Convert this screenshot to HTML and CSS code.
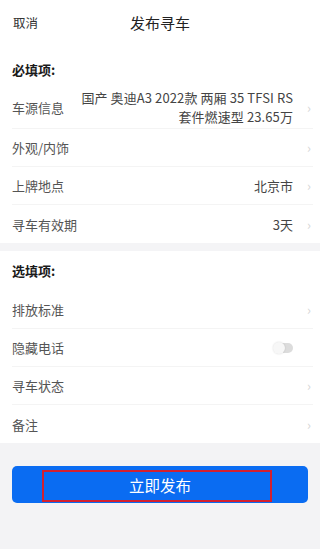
FILE: index.html
```html
<!DOCTYPE html>
<html lang="zh-CN">
<head>
    <meta charset="UTF-8">
    <meta name="viewport" content="width=device-width, initial-scale=1.0">
    <title>发布寻车</title>
    <link rel="stylesheet" href="styles.css">
</head>
<body>

    <div class="page">
        <div class="header">
            <span class="cancel">取消</span>
            <span class="title">发布寻车</span>
        </div>

        <div class="section">
            <div class="section-title">必填项:</div>
            <div class="row row-tall">
                <span class="label">车源信息</span>
                <span class="value multi">国产 奥迪A3 2022款 两厢 35 TFSI RS<br>套件燃速型 23.65万</span>
                <span class="arrow">›</span>
            </div>
            <div class="row">
                <span class="label">外观/内饰</span>
                <span class="value"></span>
                <span class="arrow">›</span>
            </div>
            <div class="row">
                <span class="label">上牌地点</span>
                <span class="value">北京市</span>
                <span class="arrow">›</span>
            </div>
            <div class="row last">
                <span class="label">寻车有效期</span>
                <span class="value">3天</span>
                <span class="arrow">›</span>
            </div>
        </div>

        <div class="gap"></div>

        <div class="section">
            <div class="section-title second">选填项:</div>
            <div class="row">
                <span class="label">排放标准</span>
                <span class="value"></span>
                <span class="arrow">›</span>
            </div>
            <div class="row">
                <span class="label">隐藏电话</span>
                <span class="value"></span>
                <span class="switch"><span class="knob"></span></span>
            </div>
            <div class="row">
                <span class="label">寻车状态</span>
                <span class="value"></span>
                <span class="arrow">›</span>
            </div>
            <div class="row last">
                <span class="label">备注</span>
                <span class="value"></span>
                <span class="arrow">›</span>
            </div>
        </div>

        <div class="footer">
            <div class="btn">
                立即发布
                <span class="mark"></span>
            </div>
        </div>
    </div>

</body>
</html>
```

FILE: styles.css
```css
body {
    font-family: 'Noto Sans CJK SC', 'Noto Sans', sans-serif;
    margin: 0;
    padding: 0;
    background: #fff;
    color: #333;
}
.page {
    width: 320px;
    height: 549px;
    display: flex;
    flex-direction: column;
    overflow: hidden;
}
.header {
    height: 45px;
    position: relative;
    display: flex;
    align-items: center;
    justify-content: center;
}
.header .cancel {
    position: absolute;
    left: 13px;
    font-size: 12.5px;
    color: #333;
}
.header .title {
    font-size: 15px;
    color: #222;
}
.section {
    padding: 0 7px 0 12px;
}
.section-title {
    font-size: 13px;
    font-weight: bold;
    color: #1a1a1a;
    line-height: 18px;
    padding: 16px 0 7px;
}
.section-title.second {
    padding: 11px 0 11px;
}
.row {
    display: flex;
    align-items: center;
    min-height: 38px;
    border-bottom: 1px solid #f4f4f4;
    box-sizing: border-box;
}
.row.last {
    border-bottom: none;
}
.row-tall {
    min-height: 42px;
    padding: 2px 0;
}
.label {
    font-size: 13px;
    color: #555;
    white-space: nowrap;
}
.value {
    flex: 1;
    text-align: right;
    font-size: 13px;
    color: #444;
    padding-right: 12px;
}
.value.multi {
    line-height: 19px;
    padding-left: 6px;
    letter-spacing: 0.1px;
}
.arrow {
    width: 8px;
    font-size: 13px;
    color: #d6d6d6;
    text-align: center;
}
.switch {
    width: 19px;
    height: 10px;
    border-radius: 5px;
    background: #dcdcdc;
    position: relative;
    margin-right: 20px;
}
.switch .knob {
    position: absolute;
    left: -1px;
    top: -1px;
    width: 12px;
    height: 12px;
    border-radius: 50%;
    background: #f7f7f7;
    box-shadow: 0 0 2px rgba(0, 0, 0, 0.15);
}
.gap {
    height: 8px;
    background: #f4f4f6;
}
.footer {
    flex: 1;
    background: #f3f3f5;
    padding: 23px 12px 0;
}
.btn {
    height: 37px;
    border-radius: 5px;
    background: #0a6cf2;
    color: #fff;
    font-size: 15.5px;
    display: flex;
    align-items: center;
    justify-content: center;
    position: relative;
}
.btn .mark {
    position: absolute;
    left: 30px;
    top: 4px;
    width: 230px;
    height: 32px;
    border: 2px solid #d3202f;
    box-sizing: border-box;
}
```
